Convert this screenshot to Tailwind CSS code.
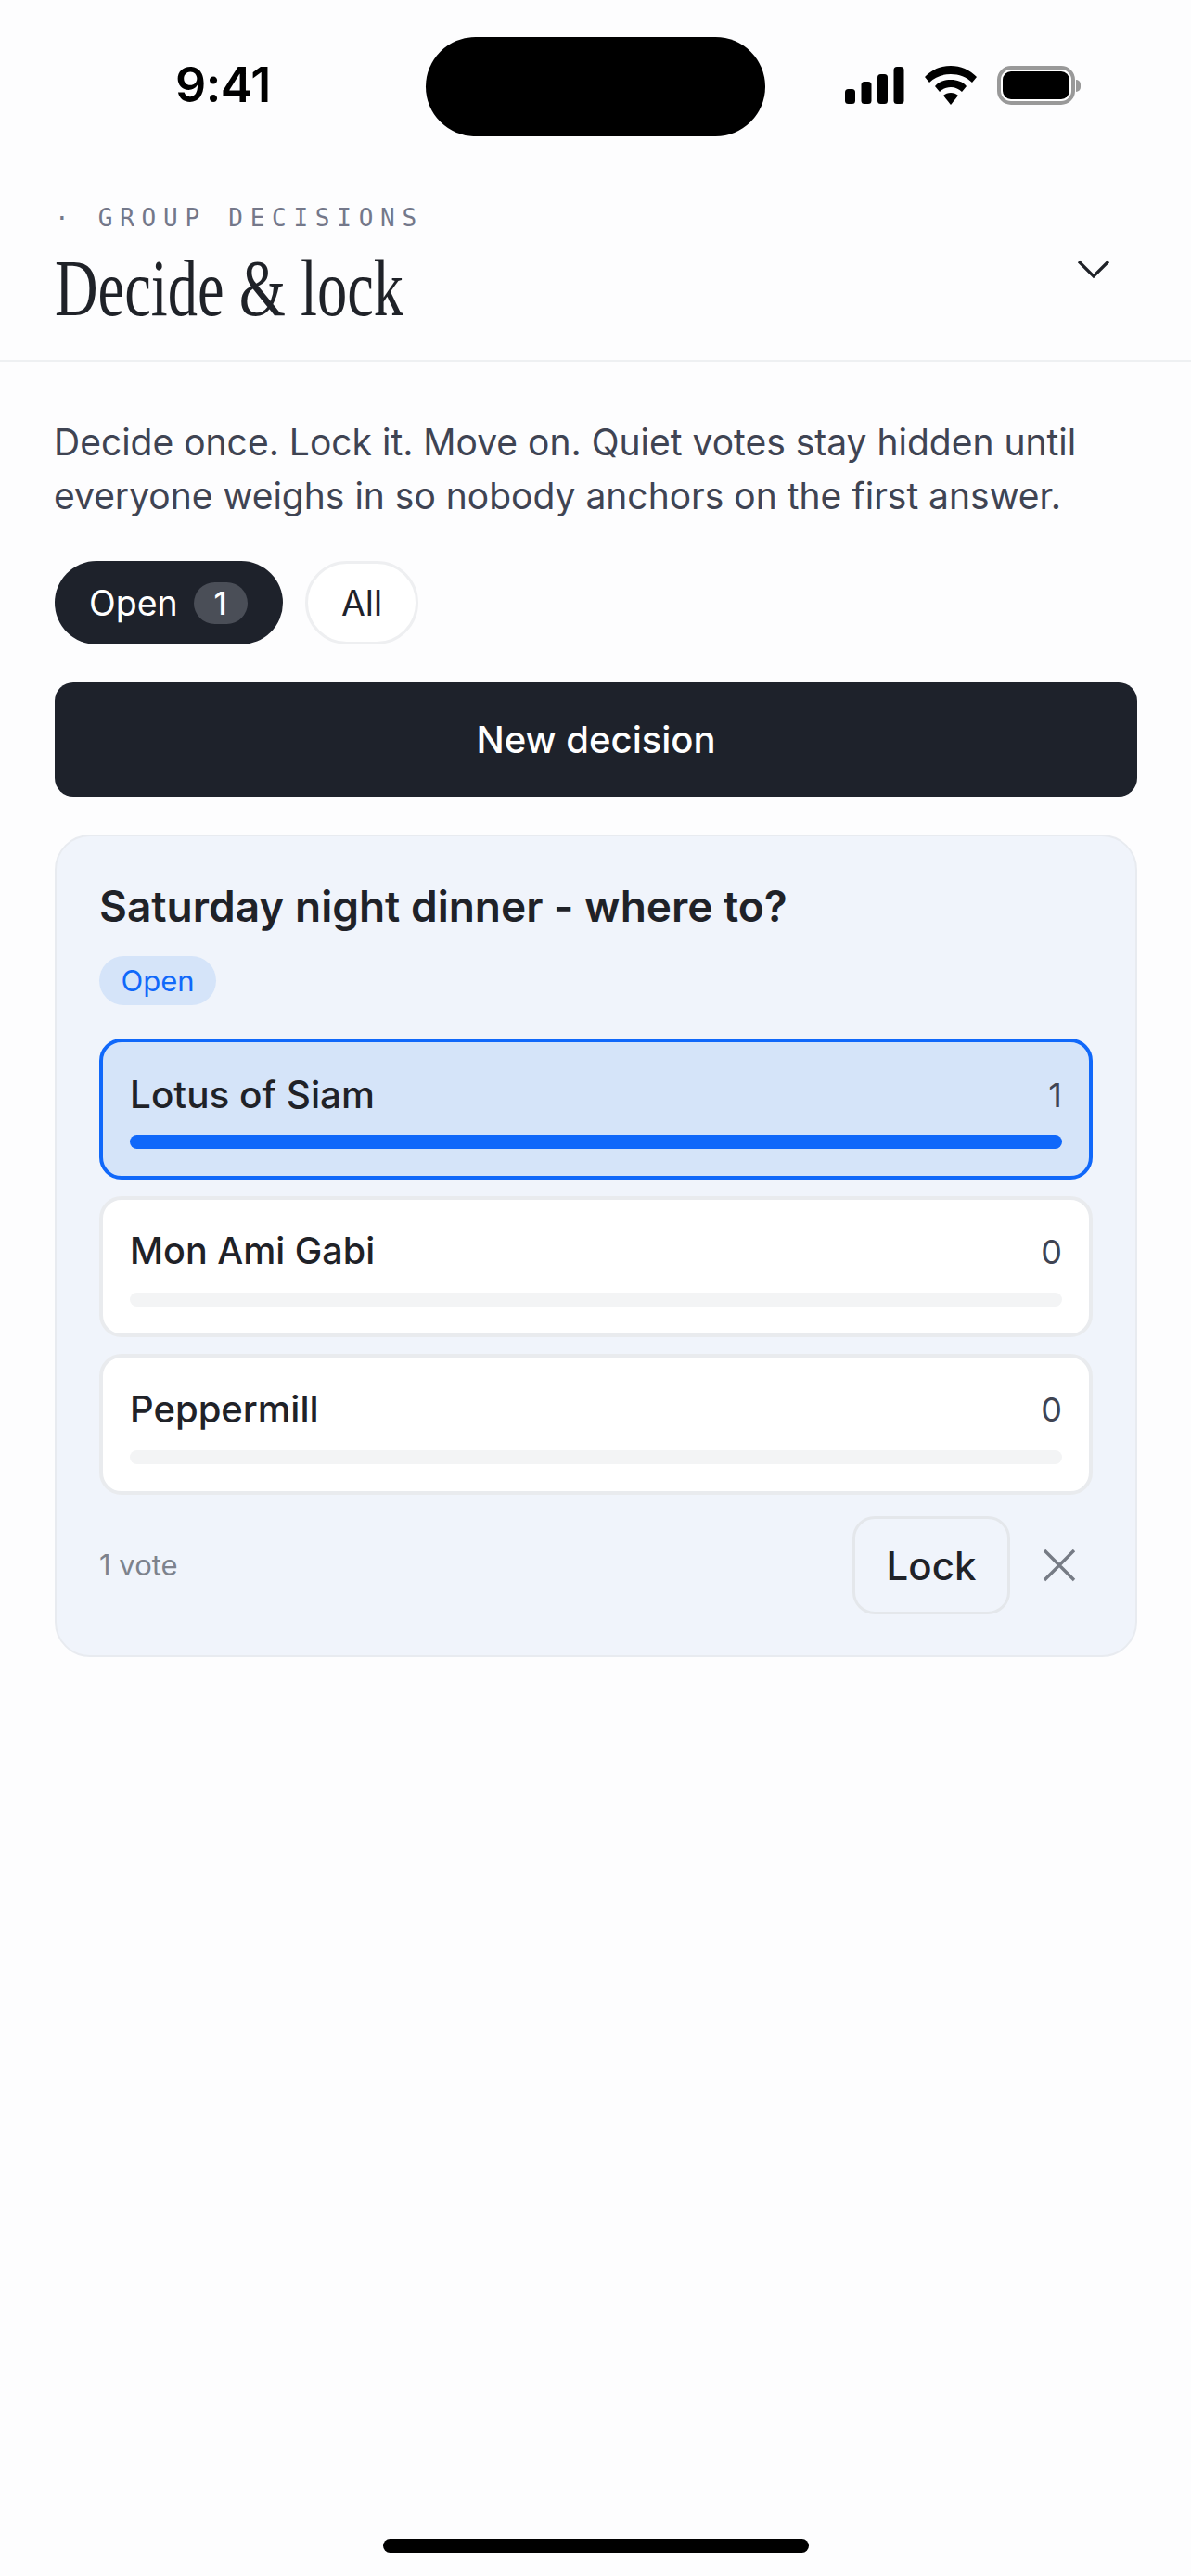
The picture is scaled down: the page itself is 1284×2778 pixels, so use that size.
<!DOCTYPE html>
<html lang="en">
<head>
    <meta charset="UTF-8">
    <meta name="viewport" content="width=device-width, initial-scale=1.0">
    <title>Decide &amp; lock</title>
    <script src="https://cdn.jsdelivr.net/npm/@tailwindcss/browser@4"></script>
</head>
<body class="bg-[#fdfdfe] font-[Inter,sans-serif]">
    <div class="relative w-[1284px] h-[2778px] overflow-hidden">

        <!-- status bar -->
        <div class="flex items-center h-[107px] mt-[40px]">
            <div class="w-[459px] pl-[189px] -mt-[4px] text-[52px] leading-none font-semibold tracking-[-0.01em] text-black">9:41</div>
            <div class="w-[366px] h-[107px] rounded-[54px] bg-black"></div>
            <div class="flex items-center pl-[85px] gap-[21px] -mt-[3px]">
                <svg width="66" height="42" viewBox="0 0 66 42"><rect x="1" y="25" width="11" height="16" rx="3.5"/><rect x="18.5" y="17" width="11" height="24" rx="3.5"/><rect x="36" y="9" width="11" height="32" rx="3.5"/><rect x="53.5" y="1" width="11" height="40" rx="3.5"/></svg>
                <svg width="56" height="42" viewBox="0 0 56 42"><path d="M28 0C17 0 8 4 0 12l5 6c6-6 14-9 23-9s17 3 23 9l5-6C48 4 39 0 28 0z"/><path d="M28 15c-7 0-13 2-17 7l5 6c3-3 7-5 12-5s9 2 12 5l5-6c-4-5-10-7-17-7z"/><path d="M28 29c-3 0-6 1-8 3l8 10 8-10c-2-2-5-3-8-3z"/></svg>
                <div class="flex items-center ml-[1px]">
                    <div class="w-[84px] h-[42px] rounded-[15px] border-[4px] border-[#999] p-[2px] bg-white">
                        <div class="w-full h-full rounded-[9px] bg-black"></div>
                    </div>
                    <div class="w-[5px] h-[13px] rounded-r-full bg-[#999] ml-[1px]"></div>
                </div>
            </div>
        </div>

        <!-- header -->
        <div class="relative h-[243px] -mb-[1px] border-b-2 border-[#eef0f2] pl-[59px]">
            <div class="pt-[73px] h-[119px] text-[26px] leading-[30px] tracking-[7.75px] text-[#74788a] font-['DejaVu_Sans_Mono',monospace]">· GROUP DECISIONS</div>
            <div class="origin-left scale-x-[0.75] w-[600px] text-[86px] leading-[90px] text-[#1f2228] font-['Liberation_Serif',serif]">Decide &amp; lock</div>
            <svg class="absolute left-[1161px] top-[132px]" width="36" height="22" viewBox="0 0 36 22" fill="none" stroke="#1f2228" stroke-width="3.2"><path d="M2 3l16 16L34 3"/></svg>
        </div>

        <main class="pl-[59px] pr-[58px]">
            <p class="-ml-[1px] mt-[59px] text-[39px] leading-[58px] text-[#3f4453]">Decide once. Lock it. Move on. Quiet votes stay hidden until<br>everyone weighs in so nobody anchors on the first answer.</p>

            <div class="flex gap-[24px] mt-[41px]">
                <div class="flex items-center gap-[17px] h-[90px] w-[246px] pl-[37px] pt-[2px] rounded-full bg-[#1e222b] text-white text-[37.5px]">
                    <span>Open</span>
                    <span class="flex items-center justify-center w-[58px] h-[45px] -mt-[2px] rounded-full bg-[#4a4e57] text-[34px] font-medium">1</span>
                </div>
                <div class="flex items-center justify-center h-[90px] w-[122px] pt-[2px] rounded-full border-[3px] border-[#eeeff1] bg-white text-[37.5px] text-[#1e222b]">All</div>
            </div>

            <button class="block w-full h-[123px] mt-[41px] rounded-[20px] bg-[#1e222b] text-white text-[40px] font-medium">New decision</button>

            <!-- decision card -->
            <section class="mt-[41px] h-[887px] rounded-[38px] border-2 border-[#e8ebf0] bg-[#f0f4fb] px-[46px]">
                <h2 class="pt-[47px] text-[46px] leading-[56px] font-semibold text-[#1f2228]">Saturday night dinner - where to?</h2>
                <span class="block w-[126px] h-[53px] mt-[26px] rounded-full bg-[#d5e4f9] text-center text-[31px] leading-[53px] text-[#1068fa]">Open</span>

                <div class="flex flex-col gap-[18px] mt-[36px]">
                    <div class="h-[152px] rounded-[24px] border-[4px] border-[#1068fa] bg-[#d5e4f9] px-[29px]">
                        <div class="flex items-center justify-between h-[100px] pt-[14px] text-[#1f2228]">
                            <span class="text-[40.5px] font-medium">Lotus of Siam</span>
                            <span class="text-[36px] text-[#3f4453]">1</span>
                        </div>
                        <div class="h-[15px] rounded-full bg-[#1068fa]"></div>
                    </div>
                    <div class="h-[152px] rounded-[24px] border-[4px] border-[#e9ebee] bg-white px-[29px]">
                        <div class="flex items-center justify-between h-[100px] pt-[12px] text-[#1f2228]">
                            <span class="text-[39.5px] font-medium">Mon Ami Gabi</span>
                            <span class="text-[36px] text-[#3f4453]">0</span>
                        </div>
                        <div class="h-[15px] rounded-full bg-[#f3f4f5]"></div>
                    </div>
                    <div class="h-[152px] rounded-[24px] border-[4px] border-[#e9ebee] bg-white px-[29px]">
                        <div class="flex items-center justify-between h-[100px] pt-[12px] text-[#1f2228]">
                            <span class="text-[40px] font-medium">Peppermill</span>
                            <span class="text-[36px] text-[#3f4453]">0</span>
                        </div>
                        <div class="h-[15px] rounded-full bg-[#f3f4f5]"></div>
                    </div>
                </div>

                <div class="flex items-center mt-[23px]">
                    <span class="text-[31px] text-[#7d828c]">1 vote</span>
                    <button class="ml-auto w-[170px] h-[106px] rounded-[24px] border-[3px] border-[#e4e7eb] text-[42px] font-medium text-[#1f2228]">Lock</button>
                    <svg class="ml-[35px] mr-[18px]" width="36" height="36" viewBox="0 0 36 36" fill="none" stroke="#767b85" stroke-width="3.4"><path d="M2 2l32 32M34 2L2 34"/></svg>
                </div>
            </section>
        </main>

        <!-- home indicator -->
        <div class="absolute left-[413px] top-[2738px] w-[459px] h-[15px] rounded-full bg-black"></div>
    </div>
</body>
</html>
